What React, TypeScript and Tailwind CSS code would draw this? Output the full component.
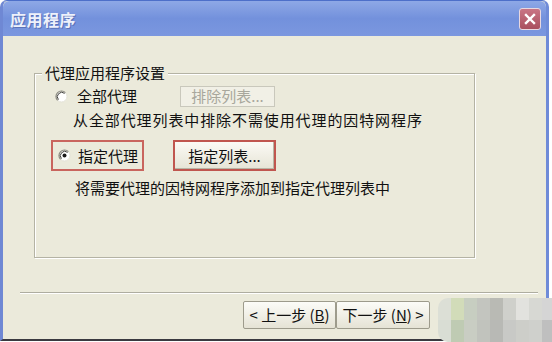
import React from "react";

const font = { fontFamily: '"Noto Sans CJK SC", "Noto Sans", sans-serif' };

function Radio({ checked }: { checked?: boolean }) {
  return (
    <svg width="13" height="13" viewBox="0 0 13 13" className="shrink-0">
      <circle cx="6.5" cy="6.5" r="5.5" fill="#ffffff" stroke="#e4e3d8" strokeWidth="1" />
      <path d="M10.4 2.6 A5.5 5.5 0 0 0 2.6 10.4" fill="none" stroke="#8b8a80" strokeWidth="1.2" />
      <path d="M9.6 3.4 A4.4 4.4 0 0 0 3.4 9.6" fill="none" stroke="#3f3f3b" strokeWidth="1" />
      {checked && <circle cx="6.5" cy="6.5" r="2" fill="#1a1a1a" />}
    </svg>
  );
}

const mosaicTop = ["#dcdfd6", "#d2dcb9", "#c7cec1", "#c3c5bf", "#b9bab4", "#cfd0cb", "#e2e2de", "#d7d8d3", "#d5d5d5"];
const mosaicBottom = ["#d9ddd4", "#bfcbb3", "#c9cdc3", "#c1c3bd", "#b8b9b5", "#c8c9c6", "#cdcec9", "#cfd0cc", "#bfbfbf"];

export default function App() {
  return (
    <div className="relative w-[552px] h-[342px] overflow-hidden bg-white text-[#111]" style={font}>
      <div className="flex flex-col w-[549px] h-[341px] rounded-t-[7px] border-t border-[#4d6fc9] border-l-[3px] border-l-[#6f88d4] border-r-[3px] border-r-[#6f8bd8] border-b-[2px] border-b-[#3a3a40] bg-[#ebeadb]">
        {/* title bar */}
        <div className="flex items-center justify-between h-[35px] rounded-t-[6px] bg-gradient-to-b from-[#8ea8e6] via-[#7391dc] to-[#7b97df] pl-[7px] pr-[5px]">
          <span className="text-[16px] font-bold tracking-[0.5px] text-[#eef1fb] [text-shadow:1px_1px_0_#5a72b8]">应用程序</span>
          <div className="flex items-center justify-center w-[22px] h-[22px] rounded-[3px] border border-[#e8d8e0] bg-gradient-to-b from-[#c97585] to-[#a9505f]">
            <svg width="14" height="14" viewBox="0 0 14 14">
              <path d="M3 3 L11 11 M11 3 L3 11" stroke="#ffffff" strokeWidth="2.4" strokeLinecap="square" />
            </svg>
          </div>
        </div>

        {/* content */}
        <div className="flex flex-col flex-1 pt-[37px] pl-[31px]">
          <div className="relative w-[441px] h-[185px] border border-[#b4b3a4] shadow-[inset_1px_1px_0_#ffffff,1px_1px_0_#ffffff] pl-[20px] pt-[12px]">
            <span className="absolute -top-[11px] left-[7px] px-[3px] bg-[#ebeadb] text-[15px] leading-[20px]">代理应用程序设置</span>

            <div className="flex items-center h-[20px]">
              <Radio />
              <span className="ml-[9px] text-[15px] leading-[18px]">全部代理</span>
              <div className="ml-[43px] flex items-center justify-center w-[95px] h-[21px] border border-[#c9c8bc] bg-[#f1f0e6] text-[15px] leading-[18px] text-[#a8a79c]">
                排除列表...
              </div>
            </div>

            <div className="mt-[5px] ml-[18px] text-[15px] leading-[18px] tracking-[0.9px]">从全部代理列表中排除不需使用代理的因特网程序</div>

            <div className="flex items-center mt-[11px] -ml-[4px]">
              <div className="flex items-center w-[93px] h-[31px] border-2 border-[#c9655e] pl-[5px]">
                <Radio checked />
                <span className="ml-[7px] text-[15px] leading-[18px]">指定代理</span>
              </div>
              <div className="ml-[29px] flex items-center justify-center w-[103px] h-[31px] border-2 border-[#c0564f] bg-gradient-to-b from-[#fbfaf5] to-[#e6e4d6] shadow-[inset_-1px_-1px_0_#b8b5a5] text-[15px] leading-[18px]">
                指定列表...
              </div>
            </div>

            <div className="mt-[8px] ml-[20px] text-[15px] leading-[18px]">将需要代理的因特网程序添加到指定代理列表中</div>
          </div>

          {/* separator */}
          <div className="mt-[34px] -ml-[14px] w-[518px] h-[2px] border-t border-[#aeada0] border-b border-b-[#ffffff]"></div>

          {/* bottom buttons */}
          <div className="flex items-start mt-[7px]">
            <div className="ml-[209px] flex">
              <div className="flex items-center justify-center w-[93px] h-[28px] border border-[#9d9b8c] rounded-[2px] bg-gradient-to-b from-[#fcfcf8] to-[#e5e3d5] text-[15px] leading-[18px]">
                &lt; 上一步 (<span className="underline">B</span>)
              </div>
              <div className="flex items-center justify-center w-[94px] h-[28px] border border-[#9d9b8c] rounded-[2px] bg-gradient-to-b from-[#fcfcf8] to-[#e5e3d5] text-[15px] leading-[18px]">
                下一步 (<span className="underline">N</span>) &gt;
              </div>
            </div>
          </div>
        </div>
      </div>

      {/* pixelated watermark */}
      <div className="absolute left-[438px] top-[298px] flex flex-col rounded-l-[10px] overflow-hidden">
        <div className="flex">
          {mosaicTop.map((c, i) => (
            <div key={i} className="w-[13px] h-[22px]" style={{ background: c }} />
          ))}
        </div>
        <div className="flex">
          {mosaicBottom.map((c, i) => (
            <div key={i} className="w-[13px] h-[22px]" style={{ background: c }} />
          ))}
        </div>
      </div>
    </div>
  );
}
